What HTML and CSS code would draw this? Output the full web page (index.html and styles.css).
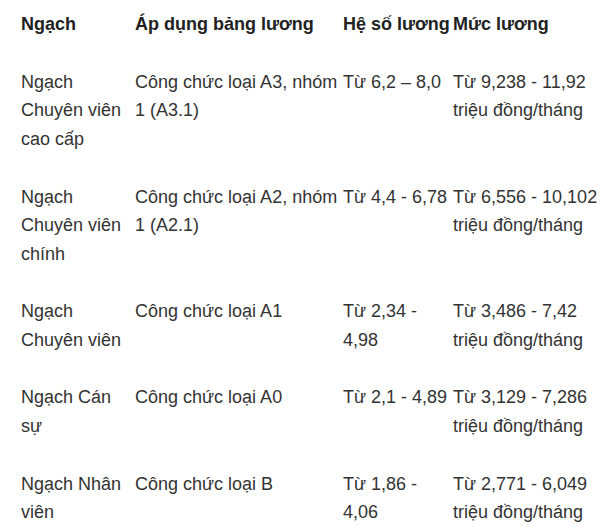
FILE: index.html
```html
<!DOCTYPE html>
<html lang="vi">
<head>
<meta charset="utf-8">
<title>Ngạch lương</title>
<link rel="stylesheet" href="styles.css">
</head>
<body>
<table class="salary">
  <colgroup>
    <col class="c1"><col class="c2"><col class="c3"><col class="c4">
  </colgroup>
  <thead>
    <tr>
      <th>Ngạch</th>
      <th>Áp dụng bảng lương</th>
      <th>Hệ số lương</th>
      <th>Mức lương</th>
    </tr>
  </thead>
  <tbody>
    <tr>
      <td>Ngạch Chuyên viên cao cấp</td>
      <td>Công chức loại A3, nhóm 1 (A3.1)</td>
      <td>Từ 6,2 – 8,0</td>
      <td>Từ 9,238 - 11,92 triệu đồng/tháng</td>
    </tr>
    <tr>
      <td>Ngạch Chuyên viên chính</td>
      <td>Công chức loại A2, nhóm 1 (A2.1)</td>
      <td>Từ 4,4 - 6,78</td>
      <td>Từ 6,556 - 10,102 triệu đồng/tháng</td>
    </tr>
    <tr>
      <td>Ngạch Chuyên viên</td>
      <td>Công chức loại A1</td>
      <td>Từ 2,34 - 4,98</td>
      <td>Từ 3,486 - 7,42 triệu đồng/tháng</td>
    </tr>
    <tr>
      <td>Ngạch Cán sự</td>
      <td>Công chức loại A0</td>
      <td>Từ 2,1 - 4,89</td>
      <td>Từ 3,129 - 7,286 triệu đồng/tháng</td>
    </tr>
    <tr>
      <td>Ngạch Nhân viên</td>
      <td>Công chức loại B</td>
      <td>Từ 1,86 - 4,06</td>
      <td>Từ 2,771 - 6,049 triệu đồng/tháng</td>
    </tr>
  </tbody>
</table>
</body>
</html>
```

FILE: styles.css
```css
html, body {
  margin: 0;
  padding: 0;
  background: #ffffff;
}
body {
  padding: 0 0 0 21px;
  font-family: "Liberation Sans", Arial, sans-serif;
  font-size: 18px;
  line-height: 28.7px;
  color: #333333;
  overflow: hidden;
}
.salary {
  border-collapse: collapse;
  table-layout: fixed;
  width: 579px;
  margin-top: -4px;
}
.c1 { width: 114px; }
.c2 { width: 208px; }
.c3 { width: 110px; }
.c4 { width: 147px; }
.salary th,
.salary td {
  padding: 14.35px 0;
  text-align: left;
  vertical-align: top;
}
.salary th {
  font-weight: bold;
  color: #222222;
}
```
